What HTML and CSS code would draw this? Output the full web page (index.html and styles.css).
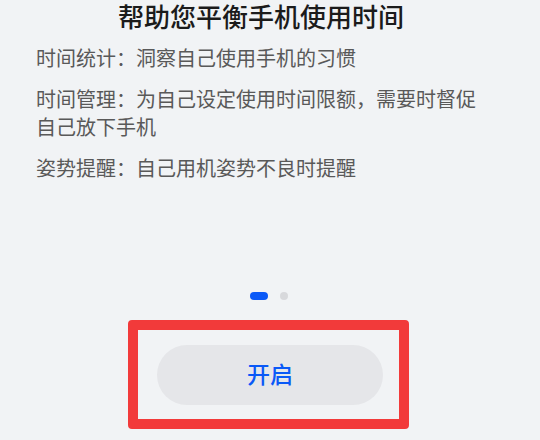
FILE: index.html
```html
<!DOCTYPE html>
<html lang="zh">
<head>
    <meta charset="utf-8">
    <title>健康使用手机</title>
    <link rel="stylesheet" href="styles.css">
</head>
<body>

    <div class="intro">
        <h1 class="intro-title">帮助您平衡手机使用时间</h1>
        <p class="intro-item">时间统计：洞察自己使用手机的习惯</p>
        <p class="intro-item">时间管理：为自己设定使用时间限额，需要时督促自己放下手机</p>
        <p class="intro-item">姿势提醒：自己用机姿势不良时提醒</p>
    </div>

    <div class="pager">
        <span class="dot active"></span>
        <span class="dot"></span>
    </div>

    <div class="highlight">
        <button class="open-btn">开启</button>
    </div>

</body>
</html>
```

FILE: styles.css
```css
body {
    margin: 0;
    padding: 0;
    width: 540px;
    height: 440px;
    overflow: hidden;
    background-color: #f1f3f5;
    font-family: "Noto Sans CJK SC", "Noto Sans", sans-serif;
}

.intro {
    padding: 0 50px 0 36px;
    height: 292px;
}
.intro-title {
    margin: 0;
    padding-right: 4px;
    font-size: 26px;
    line-height: 32px;
    font-weight: 500;
    color: #1b1b1b;
    text-align: center;
}
.intro-item {
    margin: 13px 0 0 0;
    font-size: 20px;
    line-height: 28px;
    color: #595959;
}
.intro-title + .intro-item {
    margin-top: 12px;
}

.pager {
    display: flex;
    justify-content: center;
    gap: 12px;
    height: 8px;
    padding-right: 2px;
}
.dot {
    width: 8px;
    height: 8px;
    border-radius: 4px;
    background-color: #d8d9dc;
}
.dot.active {
    width: 18px;
    background-color: #0a59f7;
}

.highlight {
    box-sizing: border-box;
    width: 281px;
    height: 109px;
    margin: 20px 0 0 128px;
    border: 10px solid #f23a3a;
    border-radius: 4px;
    display: flex;
    align-items: center;
    padding-left: 19px;
}
.open-btn {
    width: 226px;
    height: 60px;
    padding: 0 0 4px 0;
    border: none;
    border-radius: 30px;
    background-color: #e5e6e9;
    color: #0a59f7;
    font-family: "Noto Sans CJK SC", sans-serif;
    font-size: 23px;
    font-weight: 500;
    cursor: pointer;
}
```
